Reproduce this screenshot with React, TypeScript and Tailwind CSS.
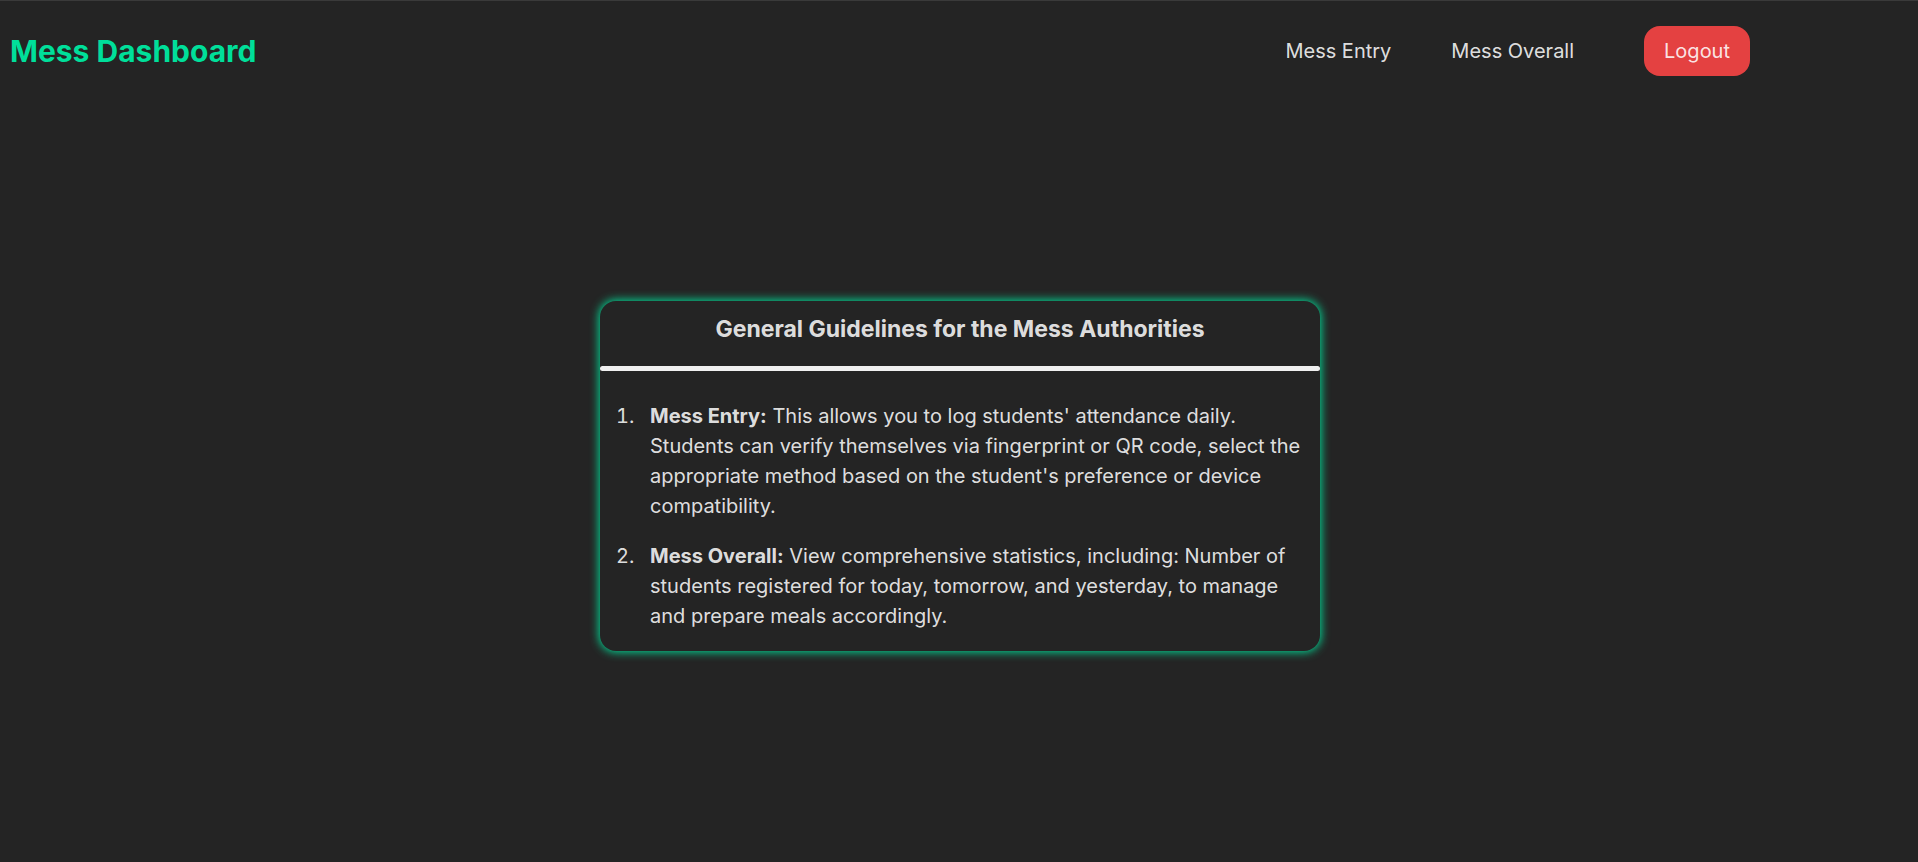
import React from "react";

const guidelines = [
  {
    title: "Mess Entry:",
    text: "This allows you to log students' attendance daily. Students can verify themselves via fingerprint or QR code, select the appropriate method based on the student's preference or device compatibility.",
  },
  {
    title: "Mess Overall:",
    text: "View comprehensive statistics, including: Number of students registered for today, tomorrow, and yesterday, to manage and prepare meals accordingly.",
  },
];

export default function App() {
  return (
    <div className="flex min-h-screen flex-col border-t border-[#3a3a3a] bg-[#242424] font-['Inter',sans-serif] text-white/87">
      <header className="flex items-center justify-between pt-[25px] pr-[168px] pl-2.5">
        <h1 className="text-3xl font-bold text-[#00df9a]">Mess Dashboard</h1>
        <nav className="flex items-center text-xl">
          <a href="#entry" className="mr-[60px]">Mess Entry</a>
          <a href="#overall" className="mr-[70px]">Mess Overall</a>
          <button type="button" className="rounded-2xl bg-[#e44141] px-5 py-[11px]">Logout</button>
        </nav>
      </header>
      <main className="flex grow justify-center pt-[225px] pb-10 pl-0.5">
        <section className="h-fit w-full max-w-[720px] rounded-2xl shadow-[0_0_10px_1px_#00df9a]">
          <h2 className="pt-3 pb-[21px] text-center text-[23px] leading-8 font-bold">General Guidelines for the Mess Authorities</h2>
          <hr className="h-[5px] rounded border-0 bg-[#f0f0f0]" />
          <ol className="list-none space-y-5 px-4 pt-[30px] pb-5 text-xl leading-[30px]">
            {guidelines.map((item, index) => (
              <li key={item.title} className="flex gap-4">
                <span className="w-[18px] shrink-0 text-right tabular-nums">{index + 1}.</span>
                <p>
                  <strong>{item.title}</strong> {item.text}
                </p>
              </li>
            ))}
          </ol>
        </section>
      </main>
    </div>
  );
}
